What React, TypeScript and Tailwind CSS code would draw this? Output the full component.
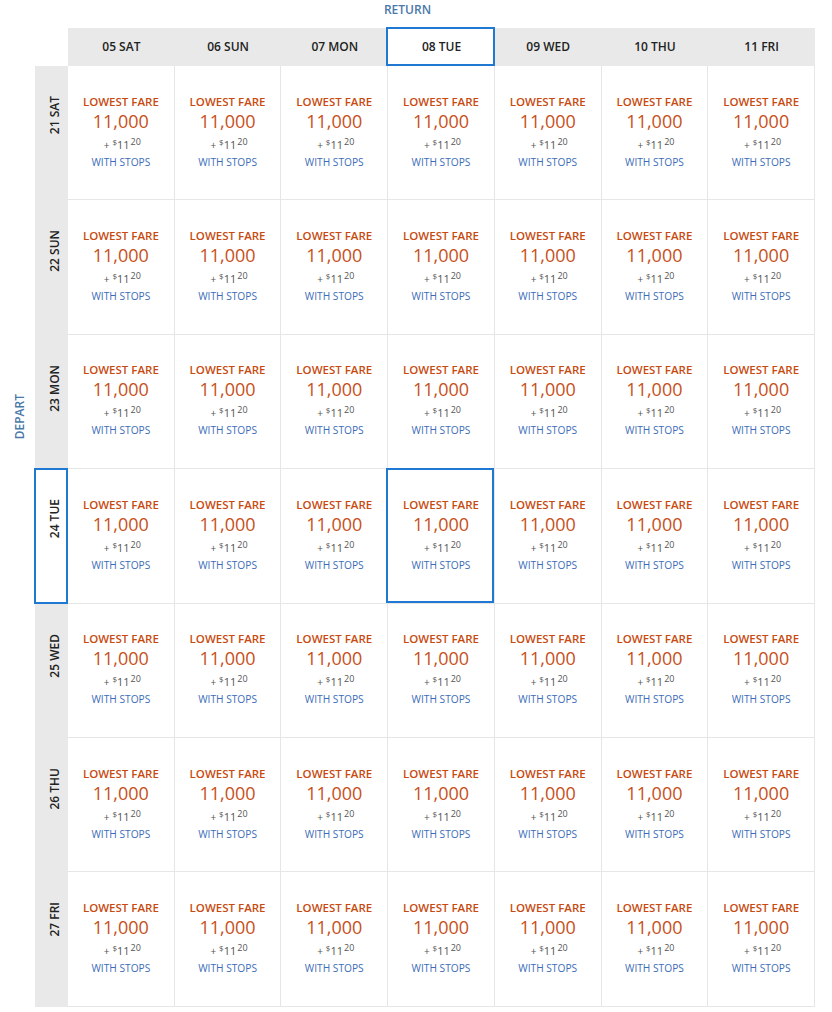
import React from 'react';

const returnDays = ['05 SAT', '06 SUN', '07 MON', '08 TUE', '09 WED', '10 THU', '11 FRI'];
const departDays = ['21 SAT', '22 SUN', '23 MON', '24 TUE', '25 WED', '26 THU', '27 FRI'];

const SELECTED_COL = 3;
const SELECTED_ROW = 3;

function FareCell({ selected }: { selected: boolean }) {
  return (
    <div className="relative h-[134.4px] border-b border-r border-[#e6e6e6] flex flex-col items-center justify-center pb-[2px]">
      {selected && (
        <div className="absolute -left-[2px] -top-px right-0 bottom-0 border-2 border-[#1f78d1]" />
      )}
      <div className="text-[11.5px] leading-[15px] font-semibold text-[#c84a10]">LOWEST FARE</div>
      <div className="text-[18px] leading-[25px] text-[#c7501a]">11,000</div>
      <div className="text-[11px] leading-[15px] text-[#555] pl-[3px] whitespace-nowrap">
        <span className="text-[10px]">+</span>{' '}
        <span className="text-[8px] align-[4px]">$</span>
        <span>11</span>
        <span className="text-[9px] align-[4px] ml-[1px]">20</span>
      </div>
      <div className="text-[10.2px] leading-[16px] mt-[1px] text-[#3c6db8]">WITH STOPS</div>
    </div>
  );
}

export default function App() {
  return (
    <div
      className="w-[832px] h-[1012px] bg-white"
      style={{ fontFamily: '"Open Sans", "Noto Sans", sans-serif' }}
    >
      <div className="w-[815px] h-[28px] flex justify-center pt-[2px]">
        <span className="text-[12px] leading-[16px] font-semibold text-[#4a78a9]">RETURN</span>
      </div>

      <div className="flex">
        <div className="w-[35px] flex justify-center items-start pt-[366px] pl-[5px]">
          <span className="text-[12px] leading-[16px] font-semibold text-[#4a78a9] [writing-mode:vertical-rl] rotate-180">
            DEPART
          </span>
        </div>

        <div className="w-[780px] grid grid-cols-[33px_repeat(7,minmax(0,1fr))]">
          <div className="h-[38px] bg-white" />
          {returnDays.map((d, i) => (
            <div
              key={d}
              className="relative h-[38px] bg-[#e9e9e9] flex items-center justify-center"
            >
              {i === SELECTED_COL && (
                <div className="absolute -left-[2px] -top-px right-0 bottom-0 border-2 border-[#1f78d1] bg-white" />
              )}
              <span className="relative text-[12px] leading-[16px] font-semibold text-[#222]">{d}</span>
            </div>
          ))}

          {departDays.map((d, r) => (
            <React.Fragment key={d}>
              <div className="relative h-[134.4px] bg-[#e9e9e9] flex justify-center items-start pt-[30px]">
                {r === SELECTED_ROW && (
                  <div className="absolute -left-px -top-px right-0 bottom-0 border-2 border-[#1f78d1] bg-white" />
                )}
                <span className="relative text-[12px] leading-[16px] font-semibold text-[#222] [writing-mode:vertical-rl] rotate-180 ml-[6px]">
                  {d}
                </span>
              </div>
              {returnDays.map((c, i) => (
                <FareCell key={c} selected={r === SELECTED_ROW && i === SELECTED_COL} />
              ))}
            </React.Fragment>
          ))}
        </div>
      </div>
    </div>
  );
}
